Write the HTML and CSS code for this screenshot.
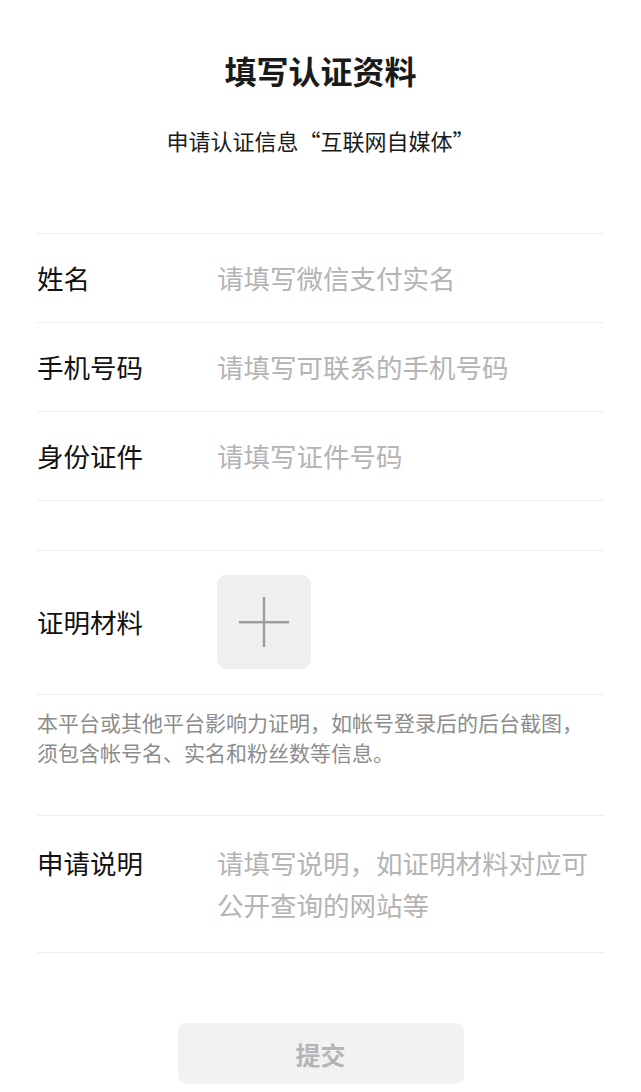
FILE: index.html
```html
<!DOCTYPE html>
<html lang="zh-CN">
<head>
<meta charset="utf-8">
<title>填写认证资料</title>
<link rel="stylesheet" href="styles.css">
</head>
<body>
<div class="page">
  <header class="header">
    <h1 class="title">填写认证资料</h1>
    <p class="subtitle">申请认证信息“互联网自媒体”</p>
  </header>

  <section class="group">
    <div class="row">
      <div class="label">姓名</div>
      <div class="field">请填写微信支付实名</div>
    </div>
    <div class="row">
      <div class="label">手机号码</div>
      <div class="field">请填写可联系的手机号码</div>
    </div>
    <div class="row">
      <div class="label">身份证件</div>
      <div class="field">请填写证件号码</div>
    </div>
  </section>

  <section class="group group-upload">
    <div class="row row-upload">
      <div class="label">证明材料</div>
      <div class="upload">
        <svg width="50" height="50" viewBox="0 0 50 50" aria-hidden="true">
          <rect x="0" y="24" width="50" height="2.4" fill="#9c9c9c"/>
          <rect x="23.8" y="0" width="2.4" height="50" fill="#9c9c9c"/>
        </svg>
      </div>
    </div>
  </section>
  <p class="hint">本平台或其他平台影响力证明，如帐号登录后的后台截图，须包含帐号名、实名和粉丝数等信息。</p>

  <section class="group group-desc">
    <div class="row row-desc">
      <div class="label">申请说明</div>
      <div class="field field-multi">请填写说明，如证明材料对应可公开查询的网站等</div>
    </div>
  </section>

  <div class="actions">
    <button class="submit" type="button">提交</button>
  </div>
</div>
</body>
</html>
```

FILE: styles.css
```css
html, body {
  margin: 0;
  padding: 0;
  background: #ffffff;
}

body {
  font-family: "Noto Sans CJK SC", "Noto Sans", sans-serif;
  color: #111111;
}

.page {
  padding: 0 37px;
}

.header {
  padding-top: 48px;
  text-align: center;
}

.title {
  margin: 0;
  font-size: 32px;
  line-height: 45px;
  font-weight: 700;
  color: #1a1a1a;
}

.subtitle {
  margin: 32px 0 0;
  font-size: 22px;
  line-height: 30px;
  color: #1a1a1a;
}

.group {
  margin-top: 78px;
  border-top: 1px solid #eeeeee;
}

.group-upload {
  margin-top: 49px;
}

.row {
  display: flex;
  align-items: center;
  height: 88px;
  border-bottom: 1px solid #eeeeee;
}

.label {
  flex: 0 0 180px;
  font-size: 26.5px;
  line-height: 36px;
  color: #111111;
}

.field {
  flex: 1;
  font-size: 26.5px;
  line-height: 36px;
  color: #b4b4b4;
}

.row-upload {
  height: auto;
  padding: 24px 0 25px;
}

.upload {
  width: 94px;
  height: 94px;
  border-radius: 9px;
  background: #efefef;
  display: flex;
  align-items: center;
  justify-content: center;
}

.hint {
  margin: 12px 0 0;
  padding-right: 10px;
  font-size: 21px;
  line-height: 30px;
  color: #8c8c8c;
}

.group-desc {
  margin-top: 48px;
}

.row-desc {
  height: auto;
  align-items: flex-start;
  padding: 26px 0 26px;
}

.row-desc .label {
  line-height: 42px;
}

.field-multi {
  line-height: 42px;
}

.actions {
  display: flex;
  justify-content: center;
  margin-top: 70px;
}

.submit {
  width: 286px;
  height: 61px;
  border: none;
  border-radius: 8px;
  background: #f2f2f2;
  font-family: "Noto Sans CJK SC", "Noto Sans", sans-serif;
  font-size: 25px;
  font-weight: 700;
  color: #b5b5b5;
  padding: 0;
}
```
